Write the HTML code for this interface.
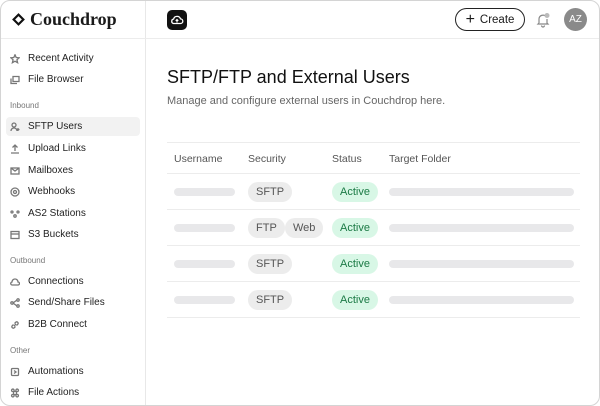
<!DOCTYPE html>
<html><head><meta charset="utf-8"><style>
*{box-sizing:border-box;margin:0;padding:0}
body{width:600px;height:406px;background:#fff;font-family:"Liberation Sans",sans-serif;color:#1a1a1a;overflow:hidden}
.frame{position:absolute;left:0;top:0;width:600px;height:406px;border:1px solid #d4d4d4;border-radius:10px;overflow:hidden;background:#fff}
.side{position:absolute;left:0;top:0;width:145px;height:406px;border-right:1px solid #e8e8e8}
.logo{position:absolute;left:11px;top:8px;font-family:"Liberation Serif",serif;font-weight:bold;font-size:18px;display:flex;align-items:center;gap:5px}
.hline{position:absolute;left:0;right:0;top:37px;border-top:1px solid #ececec}
.it{position:absolute;left:5px;width:134px;height:19px;display:flex;align-items:center;font-size:10px;color:#222;padding-left:4px;border-radius:4px}
.it svg{width:10px;height:10px;margin-right:8px;stroke:#777;fill:none;stroke-width:1.3}
.sec{position:absolute;left:9px;font-size:8px;color:#777}
.act{background:#f2f2f2}
.main{position:absolute;left:144px;top:0;right:0;height:406px}
.cloud{position:absolute;left:22px;top:9px;width:20px;height:20px;background:#111;border-radius:5px}
.create{position:absolute;left:310px;top:7px;width:70px;height:23px;border:1.5px solid #222;border-radius:12px;font-size:11.5px;display:flex;align-items:center;justify-content:center;gap:5px}
.av{position:absolute;left:419px;top:7px;width:23px;height:23px;border-radius:50%;background:#8a8a8a;color:#fff;font-size:10px;display:flex;align-items:center;justify-content:center}
h1{position:absolute;left:22px;top:66px;font-size:18px;font-weight:normal;color:#111}
.sub{position:absolute;left:22px;top:94px;font-size:11px;color:#666}
.tbl{position:absolute;left:22px;top:141px;width:413px;border-top:1px solid #ececec}
.th{height:31px;border-bottom:1px solid #ececec;position:relative;font-size:10.5px;color:#555}
.th span{position:absolute;top:10px}
.row{height:36px;border-bottom:1px solid #ececec;position:relative}
.sk{position:absolute;top:14px;height:8px;background:#e8e8ea;border-radius:4px}
.pill{position:absolute;top:8px;height:20px;padding:0 8px;border-radius:10px;background:#ececec;color:#555;font-size:11px;display:flex;align-items:center}
.ok{background:#d8f7e6;color:#1b7a45}
</style></head><body><div class="frame">
<div class="side">
<div class="logo"><svg width="13" height="13" viewBox="0 0 12 12"><path d="M6 1.5L10.5 6 6 10.5 1.5 6z" fill="none" stroke="#111" stroke-width="2"/></svg>Couchdrop</div>
<div class="hline"></div>
<div class="it" style="top:48px"><svg viewBox="0 0 10 10"><path d="M5 .8l1.2 2.7 2.9.3-2.2 2 .7 2.9L5 7.2 2.4 8.7l.7-2.9-2.2-2 2.9-.3z"/></svg>Recent Activity</div>
<div class="it" style="top:69px"><svg viewBox="0 0 10 10"><path d="M3 1.5h6v5H3zM1 3.5v5h6"/></svg>File Browser</div>
<div class="sec" style="top:100px">Inbound</div>
<div class="it act" style="top:116px"><svg viewBox="0 0 10 10"><circle cx="4" cy="3" r="2"/><path d="M1 9c0-2 1.5-3 3-3s3 1 3 3M8 6v3M6.5 7.5h3"/></svg>SFTP Users</div>
<div class="it" style="top:138px"><svg viewBox="0 0 10 10"><path d="M5 7V1M2.5 3.5L5 1l2.5 2.5M1 9h8"/></svg>Upload Links</div>
<div class="it" style="top:160px"><svg viewBox="0 0 10 10"><rect x="1" y="2" width="8" height="6"/><path d="M1 2l4 3 4-3"/></svg>Mailboxes</div>
<div class="it" style="top:181px"><svg viewBox="0 0 10 10"><circle cx="5" cy="5" r="4"/><circle cx="5" cy="5" r="1.5"/></svg>Webhooks</div>
<div class="it" style="top:203px"><svg viewBox="0 0 10 10"><circle cx="2" cy="3" r="1"/><circle cx="8" cy="3" r="1"/><circle cx="5" cy="7" r="1.2"/></svg>AS2 Stations</div>
<div class="it" style="top:224px"><svg viewBox="0 0 10 10"><rect x="1" y="1.5" width="8" height="7"/><path d="M1 4h8"/></svg>S3 Buckets</div>
<div class="sec" style="top:255px">Outbound</div>
<div class="it" style="top:271px"><svg viewBox="0 0 10 10"><path d="M2.5 8h5.5a1.5 1.5 0 000-3A3 3 0 002 5a1.5 1.5 0 00.5 3z"/></svg>Connections</div>
<div class="it" style="top:292px"><svg viewBox="0 0 10 10"><circle cx="2" cy="5" r="1.2"/><circle cx="8" cy="2" r="1.2"/><circle cx="8" cy="8" r="1.2"/><path d="M3 5l4-3M3 5l4 3"/></svg>Send/Share Files</div>
<div class="it" style="top:314px"><svg viewBox="0 0 10 10"><path d="M4 6l2-2M3.5 4.5L2 6a1.5 1.5 0 002 2l1.5-1.5M6.5 5.5L8 4a1.5 1.5 0 00-2-2L4.5 3.5"/></svg>B2B Connect</div>
<div class="sec" style="top:345px">Other</div>
<div class="it" style="top:361px"><svg viewBox="0 0 10 10"><rect x="1.5" y="1.5" width="7" height="7" rx="1"/><path d="M4 3.5l2 1.5-2 1.5"/></svg>Automations</div>
<div class="it" style="top:382px"><svg viewBox="0 0 10 10"><path d="M3.5 3.5h3v3h-3zM3.5 3.5a1.3 1.3 0 10-1.3 0zM6.5 3.5a1.3 1.3 0 111.3 0zM3.5 6.5a1.3 1.3 0 11-1.3 0zM6.5 6.5a1.3 1.3 0 101.3 0z"/></svg>File Actions</div>
</div>
<div class="main">
<div class="hline"></div>
<div class="cloud"><svg width="20" height="20" viewBox="0 0 20 20"><path d="M6.5 13.5h7a2.3 2.3 0 000-4.6A3.6 3.6 0 006.6 9a2.3 2.3 0 00-.1 4.5z" fill="none" stroke="#fff" stroke-width="1.3"/><path d="M10 12.5V9.5M8.7 10.8L10 9.5l1.3 1.3" fill="none" stroke="#fff" stroke-width="1.1"/></svg></div>
<div class="create"><span style="font-size:16px;line-height:1">+</span>Create</div>
<svg style="position:absolute;left:391px;top:11px" width="14" height="16" viewBox="0 0 14 16"><path d="M3 11V7a4 4 0 017-2.5M11 7v4l1 1H2l1-1M5.5 13.5a1.5 1.5 0 003 0" fill="none" stroke="#888" stroke-width="1.2"/><circle cx="11" cy="3.5" r="2.5" fill="#bbb"/></svg>
<div class="av">AZ</div>
<h1>SFTP/FTP and External Users</h1>
<div class="sub">Manage and configure external users in Couchdrop here.</div>
<div class="tbl">
<div class="th"><span style="left:7px">Username</span><span style="left:81px">Security</span><span style="left:165px">Status</span><span style="left:222px">Target Folder</span></div>
<div class="row"><div class="sk" style="left:7px;width:61px"></div><div class="pill" style="left:81px">SFTP</div><div class="pill ok" style="left:165px">Active</div><div class="sk" style="left:222px;width:185px"></div></div>
<div class="row"><div class="sk" style="left:7px;width:61px"></div><div class="pill" style="left:81px">FTP</div><div class="pill" style="left:118px">Web</div><div class="pill ok" style="left:165px">Active</div><div class="sk" style="left:222px;width:185px"></div></div>
<div class="row"><div class="sk" style="left:7px;width:61px"></div><div class="pill" style="left:81px">SFTP</div><div class="pill ok" style="left:165px">Active</div><div class="sk" style="left:222px;width:185px"></div></div>
<div class="row"><div class="sk" style="left:7px;width:61px"></div><div class="pill" style="left:81px">SFTP</div><div class="pill ok" style="left:165px">Active</div><div class="sk" style="left:222px;width:185px"></div></div>
</div>
</div>
</div></body></html>
